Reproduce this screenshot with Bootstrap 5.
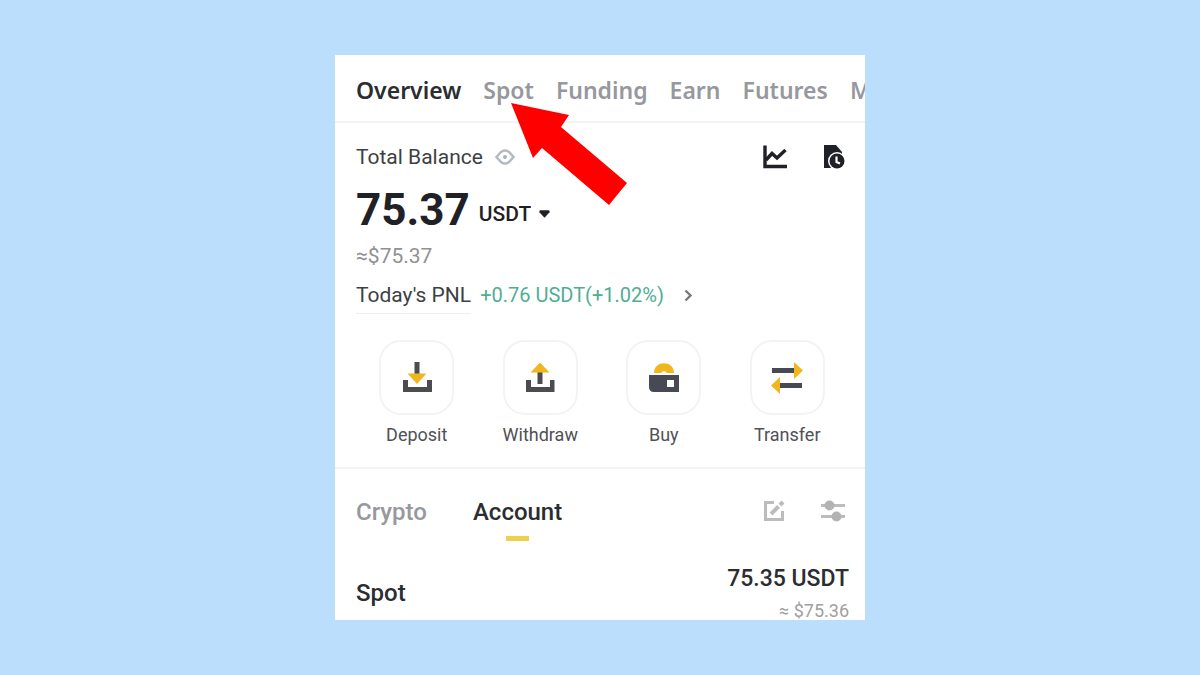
<!DOCTYPE html>
<html lang="en">
<head>
<meta charset="utf-8">
<meta name="viewport" content="width=device-width, initial-scale=1">
<title>Wallet overview</title>
<link href="https://cdn.jsdelivr.net/npm/bootstrap@5.3.0/dist/css/bootstrap.min.css" rel="stylesheet">
<script src="https://cdn.jsdelivr.net/npm/bootstrap@5.3.0/dist/js/bootstrap.bundle.min.js" defer></script>
<style>
body{background:#badefb;font-family:Roboto,"Liberation Sans",sans-serif;color:#1f2126;padding-top:55px}
.wallet{max-width:530px;overflow:hidden}
.wallet button,.wallet select{color:inherit}
.wallet svg{display:block;flex:none}
.inset{padding-left:21px;padding-right:16px}
.rule{border-bottom:2px solid #f3f3f4}
.tabs-top{gap:22px;height:68px;padding-top:4px;padding-left:21px}
.tabs-top a{font-family:"Noto Sans",sans-serif;font-size:23px;line-height:28px;font-weight:600}
.tabs-top a,.tabs-sub a{color:#96989e;text-decoration:none;white-space:nowrap}
.tabs-top a.active,.tabs-sub a.active{color:#2b2d31}
.balance{padding-top:22px;padding-bottom:21px}
.label-text{font-size:21px;line-height:24px;color:#3d3f43}
.history{margin-left:36px;margin-right:4px}
.amount{padding-top:15px;gap:9px}
.total{font-size:44px;line-height:52px;font-weight:700}
.unit{font-size:21px;line-height:24px;font-weight:500;appearance:none;width:52px}
.currency{gap:8px;padding-top:8px}
.approx{font-size:21px;line-height:24px;color:#919191;margin-top:8px}
.pnl{margin-top:15px;gap:9px}
.pnl-name{padding-bottom:6px;border-bottom:1px solid #efefef}
.gain{font-size:20px;line-height:24px;color:#4fae93}
.chev{margin-left:20px}
.actions{padding:26px 16px 0 20px}
.action{font-size:18px;line-height:22px;color:#505155!important;gap:9px}
.tile{width:75px;height:75px;border:2px solid #f3f3f4;border-radius:22px}
.holdings{padding-top:29px}
.tabs-sub{gap:46px}
.tabs-sub a{font-size:24px;line-height:28px;font-weight:500}
.tabs-sub a.active::after{content:"";display:block;width:23px;height:5px;margin:10px auto 0;background:#f0cf4c}
.tool{margin-top:2px}
.asset-row{margin-top:24px}
.asset-name{font-size:24px;line-height:28px;font-weight:500;color:#2b2d31}
.asset-value{font-size:23px;line-height:28px;font-weight:500;color:#2b2d31}
.asset-sub{font-size:18px;line-height:18px;color:#a0a0a0;margin-top:9px}
.pointer{left:176px;top:48px;pointer-events:none}
</style>
</head>
<body>
<main class="wallet bg-white position-relative mx-auto">
  <nav class="tabs-top rule d-flex align-items-center" aria-label="Wallets">
    <a class="active" href="#overview">Overview</a>
    <a href="#spot">Spot</a>
    <a href="#funding">Funding</a>
    <a href="#earn">Earn</a>
    <a href="#futures">Futures</a>
    <a href="#margin" aria-label="Margin">M</a>
  </nav>

  <section class="rule balance" id="overview">
    <div class="inset">
      <div class="d-flex align-items-center">
        <span class="label-text">Total Balance</span>
        <button class="btn p-0 border-0 ms-2 ps-1" aria-label="Hide balance">
          <svg width="20" height="18" viewBox="0 0 20 18" fill="none" stroke="#b4bac2" stroke-width="2.4"><path d="M1.500 9L6 4Q10 .8 14 4L18.500 9L14 14Q10 17.200 6 14Z"/><circle cx="10" cy="9" r="2" fill="#a9b0b9" stroke="none"/></svg>
        </button>
        <button class="btn p-0 border-0 ms-auto" aria-label="Analysis">
          <svg width="24" height="24" viewBox="0 0 24 24" fill="none" stroke="#1f2126" stroke-width="3.400"><path d="M2 .5V21.500H24"/><path d="M3 15L9 8.500L14 13L22.500 5"/></svg>
        </button>
        <button class="btn p-0 border-0 history" aria-label="History">
          <svg width="22" height="24" viewBox="0 0 22 24"><path d="M1 0H13L19 7V10H1ZM1 9H9V23H1Z" fill="#1f2126"/><circle cx="14" cy="16" r="9" fill="#fff"/><circle cx="14" cy="16" r="7.500" fill="#1f2126"/><path d="M13.500 11.500V17L17 18.500" fill="none" stroke="#fff" stroke-width="2.200"/></svg>
        </button>
      </div>
      <div class="d-flex align-items-center amount">
        <span class="total">75.37</span>
        <div class="currency d-flex align-items-center">
          <select class="unit border-0 bg-transparent p-0" aria-label="Currency"><option>USDT</option></select>
          <svg width="11" height="8" viewBox="0 0 12 8"><path d="M1.500 0H10.500Q12 0 11.500 2L6 8L.5 2Q0 0 1.500 0Z" fill="#1f2126"/></svg>
        </div>
      </div>
      <div class="approx">≈$75.37</div>
      <div class="d-flex align-items-start pnl">
        <span class="pnl-name label-text">Today's PNL</span>
        <a class="gain text-decoration-none d-flex align-items-center" href="#pnl">+0.76 USDT(+1.02%)
          <svg class="chev" width="9" height="13" viewBox="0 0 9 13" fill="none" stroke="#77797d" stroke-width="2.400"><path d="M1.500 1.500L6.500 6.500L1.500 11.500"/></svg>
        </a>
      </div>
    </div>
    <div class="row g-0 actions">
      <div class="col"><button class="btn p-0 border-0 action d-flex flex-column align-items-center w-100"><span class="tile d-flex align-items-center justify-content-center"><svg width="32" height="32" viewBox="0 0 32 32"><path d="M13.500 0H18.500V12H13.500ZM2 18H7V25H26V18H31V30H2Z" fill="#4b4c52"/><path d="M6.500 11.500H25.500L16 22Z" fill="#f0b71c"/></svg></span>Deposit</button></div>
      <div class="col"><button class="btn p-0 border-0 action d-flex flex-column align-items-center w-100"><span class="tile d-flex align-items-center justify-content-center"><svg width="32" height="32" viewBox="0 0 32 32"><path d="M13.500 9H18.500V22H13.500ZM2 18H7V25H26V18H30.500V30H2Z" fill="#4b4c52"/><path d="M6.500 10.500H25.500L16 .5Z" fill="#f0b71c"/></svg></span>Withdraw</button></div>
      <div class="col"><button class="btn p-0 border-0 action d-flex flex-column align-items-center w-100"><span class="tile d-flex align-items-center justify-content-center"><svg width="32" height="32" viewBox="0 0 32 32"><path d="M6 11C6-2 26-2 26 11H19Q16 7 13 11Z" fill="#f0b71c"/><path fill-rule="evenodd" d="M1 13H31V30H6Q1 30 1 25ZM19 18V25H26V18Z" fill="#474a55"/></svg></span>Buy</button></div>
      <div class="col"><button class="btn p-0 border-0 action d-flex flex-column align-items-center w-100"><span class="tile d-flex align-items-center justify-content-center"><svg width="32" height="32" viewBox="0 0 32 32"><path d="M1 6H24V11H1ZM8 21H31V26H8Z" fill="#474a55"/><path d="M23 0L32 8.500L23 17ZM9 15L0 23.500L9 32Z" fill="#f0b71c"/></svg></span>Transfer</button></div>
    </div>
  </section>

  <section class="inset holdings">
    <div class="d-flex align-items-start">
      <nav class="tabs-sub d-flex" aria-label="Holdings">
        <a href="#crypto">Crypto</a>
        <a class="active" href="#account">Account</a>
      </nav>
      <button class="btn p-0 border-0 ms-auto tool" aria-label="Edit">
        <svg width="22" height="22" viewBox="0 0 22 22" fill="none" stroke="#bcbcbe" stroke-width="3"><path d="M11 2.500H2.500V19.500H19.500V11"/><path d="M8 14L15.500 6.500M17 5L20 2" stroke-width="4"/></svg>
      </button>
      <button class="btn p-0 border-0 history tool" aria-label="Filter">
        <svg width="24" height="22" viewBox="0 0 24 22"><path d="M0 4H24V7H0ZM0 15H24V18H0Z" fill="#bcbcbe"/><circle cx="8.500" cy="5.500" r="5" fill="#b3b3b5"/><circle cx="15.500" cy="16.500" r="5" fill="#b3b3b5"/></svg>
      </button>
    </div>
    <div class="d-flex align-items-center justify-content-between asset-row" id="account">
      <span class="asset-name">Spot</span>
      <div class="text-end"><div class="asset-value">75.35 USDT</div><div class="asset-sub">≈ $75.36</div></div>
    </div>
  </section>

  <svg class="pointer position-absolute" width="117" height="102" viewBox="0 0 117 102" aria-hidden="true"><path d="M0 0L58 12L50 24L116 80L98 102L31 45L22 55Z" fill="#f00"/></svg>
</main>
</body>
</html>
